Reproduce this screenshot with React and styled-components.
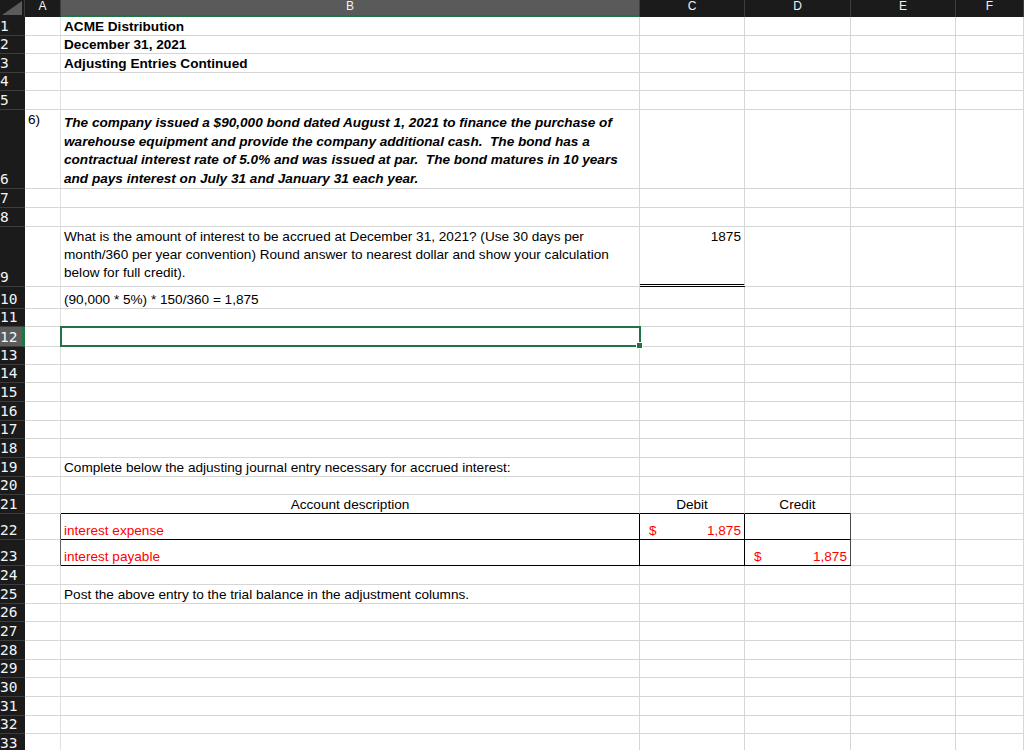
import React from "react";
import styled, { createGlobalStyle, css } from "styled-components";

const GRID = "#d6d6d6";
const GREEN = "#217346";
const RED = "#ff0000";

const heights = [
  19, 18, 19, 18, 19, 79, 19, 19, 60, 22, 18, 20, 18, 18, 19, 19, 18, 19, 19,
  18, 19, 26, 26, 19, 19, 18, 19, 19, 18, 19, 19, 18, 19,
];

const columns = ["A", "B", "C", "D", "E", "F"];

const GlobalStyle = createGlobalStyle`
  html, body {
    margin: 0;
    padding: 0;
    background: #ffffff;
    overflow: hidden;
  }
  body {
    font-family: "Liberation Sans", Arial, sans-serif;
    font-size: 13.6px;
    color: #000;
  }
`;

const Sheet = styled.div`
  display: grid;
  grid-template-columns: 25px 36px 579px 105px 106px 105px 68px;
  grid-template-rows: 17px ${heights.map((h) => `${h}px`).join(" ")};
  width: 1024px;
  height: 750px;
  overflow: hidden;
`;

const Corner = styled.div`
  background: #1b1b1b;
  border-right: 1px solid #3a3a3a;
  display: flex;
  svg {
    display: block;
  }
`;

const ColHead = styled.div`
  box-sizing: border-box;
  background: ${(p) => (p.$active ? "#5a5a5a" : "#1b1b1b")};
  border-right: 1px solid #3f3f3f;
  border-bottom: ${(p) => (p.$active ? `2px solid ${GREEN}` : "none")};
  color: #f2f2f2;
  font-size: 12px;
  line-height: 13px;
  display: flex;
  justify-content: center;
  align-items: flex-start;
`;

const RowHead = styled.div`
  box-sizing: border-box;
  background: ${(p) => (p.$active ? "#5c5c5c" : "#1b1b1b")};
  border-bottom: 1px solid #3c3c3c;
  border-right: ${(p) => (p.$active ? `3px solid ${GREEN}` : "0")};
  color: #f4f4f4;
  font-family: "DejaVu Sans Mono", monospace;
  font-size: 14.5px;
  line-height: 17px;
  padding-left: 0;
  display: flex;
  align-items: flex-end;
  overflow: hidden;
`;

const Cell = styled.div`
  box-sizing: border-box;
  position: relative;
  border-right: 1px solid ${(p) => p.$right || GRID};
  border-bottom: ${(p) =>
    p.$double ? "3px double #000" : `1px solid ${p.$bottom || GRID}`};
  padding: 0 3px 0 3px;
  line-height: 17px;
  display: flex;
  flex-direction: column;
  justify-content: ${(p) => (p.$top ? "flex-start" : "flex-end")};
  align-items: ${(p) =>
    p.$align === "center"
      ? "center"
      : p.$align === "right"
      ? "flex-end"
      : "stretch"};
  white-space: pre;
  overflow: visible;
  ${(p) =>
    p.$selected &&
    css`
      &::after {
        content: "";
        position: absolute;
        left: -1px;
        top: -1px;
        right: -2px;
        bottom: -1px;
        border: 2px solid ${GREEN};
        pointer-events: none;
      }
      &::before {
        content: "";
        position: absolute;
        right: -4px;
        bottom: -3px;
        width: 5px;
        height: 5px;
        background: ${GREEN};
        border: 1px solid #fff;
        z-index: 2;
      }
    `}
`;

const Bold = styled.span`
  font-weight: bold;
`;

const Problem = styled.div`
  font-weight: bold;
  font-style: italic;
  line-height: 18.5px;
`;

const Question = styled.div`
  line-height: 18px;
  padding-top: 1px;
`;

const Red = styled.span`
  color: ${RED};
`;

const Money = styled.div`
  display: flex;
  justify-content: space-between;
  color: ${RED};
  padding-left: 6px;
`;

const Step = styled.span`
  padding-top: 1px;
`;

const rows = {
  1: { B: <Bold>ACME Distribution</Bold> },
  2: { B: <Bold>December 31, 2021</Bold> },
  3: { B: <Bold>Adjusting Entries Continued</Bold> },
  6: {
    A: { content: <Step>6)</Step>, top: true },
    B: {
      content: (
        <Problem>
          <div>The company issued a $90,000 bond dated August 1, 2021 to finance the purchase of</div>
          <div>warehouse equipment and provide the company additional cash.  The bond has a</div>
          <div>contractual interest rate of 5.0% and was issued at par.  The bond matures in 10 years</div>
          <div>and pays interest on July 31 and January 31 each year.</div>
        </Problem>
      ),
    },
  },
  9: {
    B: {
      top: true,
      content: (
        <Question>
          <div>What is the amount of interest to be accrued at December 31, 2021? (Use 30 days per</div>
          <div>month/360 per year convention) Round answer to nearest dollar and show your calculation</div>
          <div>below for full credit).</div>
        </Question>
      ),
    },
    C: { content: <Step>1875</Step>, top: true, align: "right", double: true },
  },
  10: { B: "(90,000 * 5%) * 150/360 = 1,875" },
  12: { B: { selected: true } },
  19: {
    B: "Complete below the adjusting journal entry necessary for accrued interest:",
  },
  21: {
    B: { content: "Account description", align: "center", bottom: "#000" },
    C: { content: "Debit", align: "center", bottom: "#000" },
    D: { content: "Credit", align: "center", bottom: "#000" },
  },
  22: {
    A: { right: "#5e5e5e" },
    B: { content: <Red>interest expense</Red>, bottom: "#000", right: "#000" },
    C: {
      content: (
        <Money>
          <span>$</span>
          <span>1,875</span>
        </Money>
      ),
      bottom: "#000",
      right: "#000",
    },
    D: { bottom: "#000", right: "#4a4a4a" },
  },
  23: {
    A: { right: "#5e5e5e" },
    B: { content: <Red>interest payable</Red>, bottom: "#000", right: "#000" },
    C: { bottom: "#000", right: "#000" },
    D: {
      content: (
        <Money>
          <span>$</span>
          <span>1,875</span>
        </Money>
      ),
      bottom: "#000",
      right: "#4a4a4a",
    },
  },
  25: {
    B: "Post the above entry to the trial balance in the adjustment columns.",
  },
};

const normalize = (v) => {
  if (v === undefined) return {};
  if (typeof v === "string" || React.isValidElement(v)) return { content: v };
  return v;
};

const CornerIcon = () => (
  <svg width="24" height="17" viewBox="0 0 24 17">
    <polygon points="2,15 22,1 22,15" fill="#5b5b5b" />
  </svg>
);

export default function App() {
  return (
    <>
      <GlobalStyle />
      <Sheet>
        <Corner>
          <CornerIcon />
        </Corner>
        {columns.map((c) => (
          <ColHead key={c} $active={c === "B"}>
            {c}
          </ColHead>
        ))}
        {heights.map((_, i) => {
          const n = i + 1;
          const row = rows[n] || {};
          return (
            <React.Fragment key={n}>
              <RowHead $active={n === 12}>{n}</RowHead>
              {columns.map((c) => {
                const cell = normalize(row[c]);
                return (
                  <Cell
                    key={c}
                    $top={cell.top}
                    $align={cell.align}
                    $bottom={cell.bottom}
                    $right={cell.right || (c === "A" ? "#e0e0e0" : undefined)}
                    $double={cell.double}
                    $selected={cell.selected}
                  >
                    {cell.content}
                  </Cell>
                );
              })}
            </React.Fragment>
          );
        })}
      </Sheet>
    </>
  );
}
